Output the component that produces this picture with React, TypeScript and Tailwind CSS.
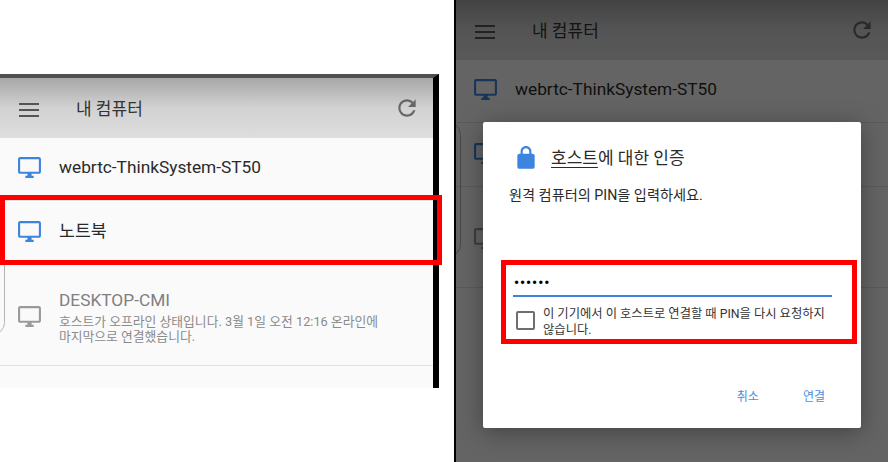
const FONT = "font-['Roboto','Noto_Sans_CJK_KR',sans-serif]";

const DESKTOP =
  "M21 2H3c-1.1 0-2 .9-2 2v12c0 1.1.9 2 2 2h7v2H8v2h8v-2h-2v-2h7c1.1 0 2-.9 2-2V4c0-1.1-.9-2-2-2zm0 14H3V4h18v12z";
const REFRESH =
  "M17.65 6.35C16.2 4.9 14.21 4 12 4c-4.42 0-7.99 3.58-7.99 8s3.57 8 7.99 8c3.73 0 6.84-2.55 7.73-6h-2.08c-.82 2.33-3.04 4-5.65 4-3.31 0-6-2.69-6-6s2.69-6 6-6c1.66 0 3.14.69 4.22 1.78L13 11h7V4l-2.35 2.35z";
const LOCK =
  "M18 8h-1V6c0-2.76-2.24-5-5-5S7 3.24 7 6v2H6c-1.1 0-2 .9-2 2v10c0 1.1.9 2 2 2h12c1.1 0 2-.9 2-2V10c0-1.1-.9-2-2-2zM9 6c0-1.66 1.34-3 3-3s3 1.34 3 3v2H9V6z";

const Icon = ({ d, className }: { d: string; className: string }) => (
  <svg viewBox="0 0 24 24" fill="currentColor" className={className}>
    <path d={d} />
  </svg>
);

const Header = () => (
  <div className="flex h-[60px] shrink-0 items-center bg-gradient-to-b from-[#a8a8a8] via-[#d2d2d2] to-[#dedede] pl-[19px] pr-[13px] pt-[3px]">
    <div className="flex w-[20px] flex-col gap-[4px]">
      <div className="h-[2px] bg-[#555]" />
      <div className="h-[2px] bg-[#555]" />
      <div className="h-[2px] bg-[#555]" />
    </div>
    <span className="ml-[37px] text-[17px] text-[#333]">내 컴퓨터</span>
    <Icon d={REFRESH} className="ml-auto h-[26px] w-[26px] -translate-y-[2px] text-[#666]" />
  </div>
);

const HostRow = ({
  name,
  offline,
  className,
}: {
  name: string;
  offline?: boolean;
  className: string;
}) => (
  <div className={`flex items-center border-b border-[#e2e2e2] pl-[17px] ${className}`}>
    <Icon d={DESKTOP} className={`h-[25px] w-[25px] shrink-0 ${offline ? "text-[#9a9a9a]" : "text-[#3d83e0]"}`} />
    <div className="ml-[17px] min-w-0">
      <div className={`text-[17.3px] leading-[20px] ${offline ? "text-[#808080]" : "text-[#2a2a2a]"}`}>{name}</div>
      {offline && (
        <div className="mt-[4px] w-[330px] break-keep text-[12.8px] leading-[15px] text-[#8a8a8a]">
          호스트가 오프라인 상태입니다. 3월 1일 오전 12:16 온라인에 마지막으로 연결했습니다.
        </div>
      )}
    </div>
  </div>
);

const HostList = () => (
  <div className="flex min-h-0 flex-1 flex-col bg-[#fafafa]">
    <HostRow name="webrtc-ThinkSystem-ST50" className="h-[63px] shrink-0 pb-[4px]" />
    <HostRow name="노트북" className="h-[64px] shrink-0 pb-[3px]" />
    <HostRow name="DESKTOP-CMI" offline className="h-[101px] shrink-0 pt-[3px]" />
  </div>
);

export default function App() {
  return (
    <div className={`${FONT} relative flex h-[462px] w-[892px] overflow-hidden bg-white`}>
      <div className="w-[454px] shrink-0 pt-[74px]">
        <div className="relative flex h-[314px] w-[439px] flex-col overflow-hidden border-r-[6px] border-t-[4px] border-r-black border-t-[#4f4f4f]">
          <Header />
          <HostList />
          <div className="absolute -left-[20px] top-[122px] h-[135px] w-[25px] rounded-[14px] border border-[#b5b5b5]" />
        </div>
        <div className="absolute left-0 top-[195px] h-[70px] w-[442px] border-[5px] border-[#ff0000]" />
      </div>

      <div className="relative h-full w-[434px] shrink-0 overflow-hidden border-l-2 border-black">
        <div className="flex h-full flex-col bg-[#fafafa]">
          <Header />
          <HostList />
          <div className="flex-1" />
          <div className="absolute -left-[20px] top-[122px] h-[135px] w-[25px] rounded-[14px] border border-[#b5b5b5]" />
        </div>
        <div className="absolute inset-0 bg-black/60" />

        <div className="absolute left-[27px] top-[122px] flex h-[306px] w-[378px] flex-col rounded-[2px] bg-white pl-[25px] pr-[29px] shadow-[0_4px_24px_rgba(0,0,0,0.35)]">
          <div className="flex items-center pt-[22px]">
            <Icon d={LOCK} className="ml-[5px] h-[26px] w-[26px] text-[#3d83e0]" />
            <span className="ml-[12px] text-[17px] leading-[28px] text-[#2a2a2a]">
              <span className="underline underline-offset-[3px]">호스트</span>에 대한 인증
            </span>
          </div>
          <p className="mt-[13px] ml-[1px] text-[14.2px] leading-[20px] text-[#2a2a2a]">원격 컴퓨터의 PIN을 입력하세요.</p>

          <div className="mt-[68px] ml-[5px] border-b-2 border-[#3d83d8] pb-[2px] pl-[1px] text-[14px] font-bold leading-[20px] tracking-[1px] text-black">
            ••••••
          </div>

          <div className="mt-[9px] ml-[8px] flex items-start">
            <div className="mt-[5px] h-[19px] w-[19px] shrink-0 rounded-[2px] border-2 border-[#6e6e6e]" />
            <p className="ml-[8px] w-[290px] break-keep text-[12.3px] leading-[16px] text-[#333]">
              이 기기에서 이 호스트로 연결할 때 PIN을 다시 요청하지 않습니다.
            </p>
          </div>

          <div className="mt-[50px] flex justify-end gap-[44px] pr-[7px] text-[12px] text-[#4f8ddc]">
            <span>취소</span>
            <span>연결</span>
          </div>
        </div>

        <div className="absolute left-[45px] top-[260px] h-[84px] w-[356px] border-[5px] border-[#ff0000]" />
      </div>
    </div>
  );
}
